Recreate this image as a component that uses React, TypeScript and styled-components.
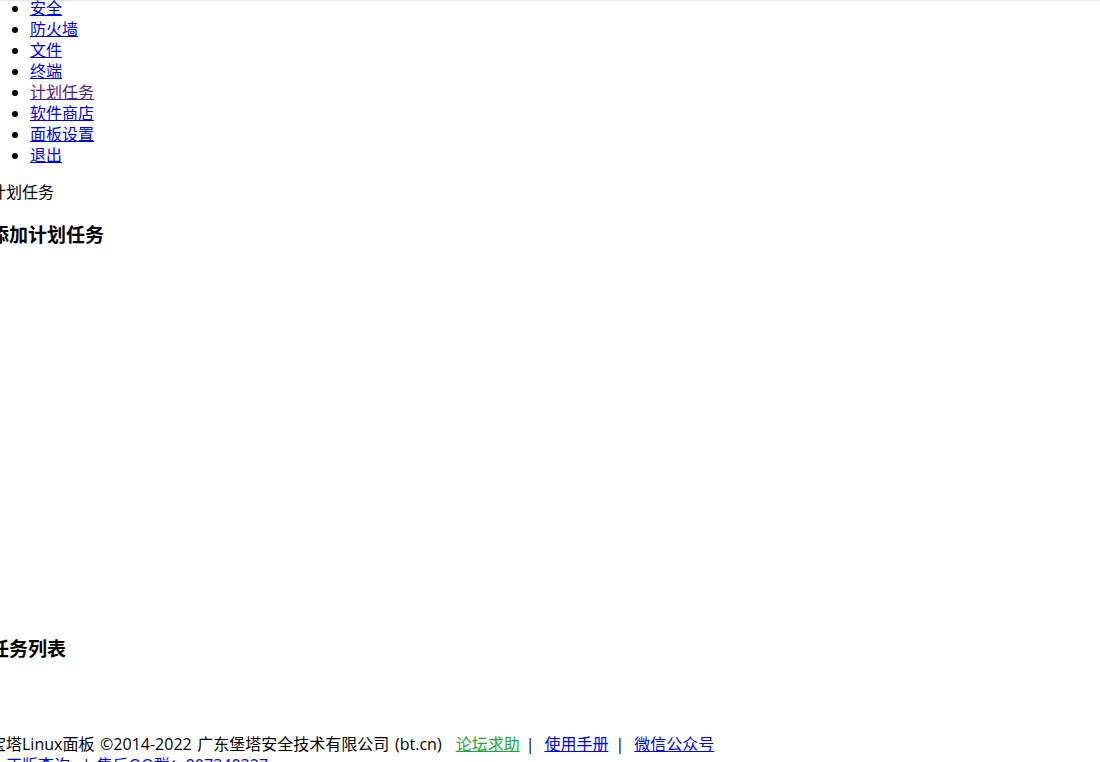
import React from 'react';
import styled, { createGlobalStyle } from 'styled-components';

const GlobalStyle = createGlobalStyle`
  html, body {
    margin: 0;
    height: 762px;
    overflow: hidden;
    background: #fff;
  }
  body {
    font-family: "Open Sans", "Noto Sans CJK SC", "Liberation Sans", sans-serif;
    font-size: 16px;
    line-height: 21px;
    color: #000;
  }
`;

const Page = styled.div`
  margin-left: -10px;
  border-top: 1px solid #e7e7e7;
`;

const Menu = styled.ul`
  margin: -3px 0 16px;
  padding-left: 40px;
`;

const MenuItem = styled.li`
  height: 21px;
`;

const Link = styled.a<{ $visited?: boolean; $green?: boolean }>`
  color: ${(p) => (p.$green ? '#20a53a' : p.$visited ? '#551a8b' : '#0000ee')};
  text-decoration: underline;
`;

const Crumb = styled.p`
  margin: 0;
`;

const SectionTitle = styled.h3`
  margin: 20px 0 18px;
  font-size: 19px;
  line-height: 25px;
  font-weight: 700;
`;

const FormArea = styled.div`
  height: 351px;
`;

const TableArea = styled.div`
  height: 54px;
`;

const Footer = styled.div`
  display: flex;
  flex-direction: column;
`;

const FooterRow = styled.div<{ $indent?: number }>`
  padding-left: ${(p) => p.$indent || 0}px;
  white-space: nowrap;
  word-spacing: 1.5px;
`;

const Sep = styled.span<{ $left: number; $right: number }>`
  margin-left: ${(p) => p.$left}px;
  margin-right: ${(p) => p.$right}px;
`;

const menu = ['安全', '防火墙', '文件', '终端', '计划任务', '软件商店', '面板设置', '退出'];

const App = () => {
  return (
    <Page>
      <GlobalStyle />
      <Menu>
        {menu.map((name) => (
          <MenuItem key={name}>
            <Link href="#" $visited={name === '计划任务'}>{name}</Link>
          </MenuItem>
        ))}
      </Menu>
      <Crumb>计划任务</Crumb>
      <SectionTitle>添加计划任务</SectionTitle>
      <FormArea />
      <SectionTitle>任务列表</SectionTitle>
      <TableArea />
      <Footer>
        <FooterRow>
          宝塔Linux面板 ©2014-2022 广东堡塔安全技术有限公司 (bt.cn)
          <Sep $left={14} $right={0} />
          <Link href="#" $green>论坛求助</Link>
          <Sep $left={6} $right={10}>|</Sep>
          <Link href="#">使用手册</Link>
          <Sep $left={7} $right={10}>|</Sep>
          <Link href="#">微信公众号</Link>
        </FooterRow>
        <FooterRow $indent={16}>
          <Link href="#">正版查询</Link>
          <Sep $left={12} $right={6}>|</Sep>
          <Link href="#">售后QQ群：907340327</Link>
        </FooterRow>
      </Footer>
    </Page>
  );
};

export default App;
